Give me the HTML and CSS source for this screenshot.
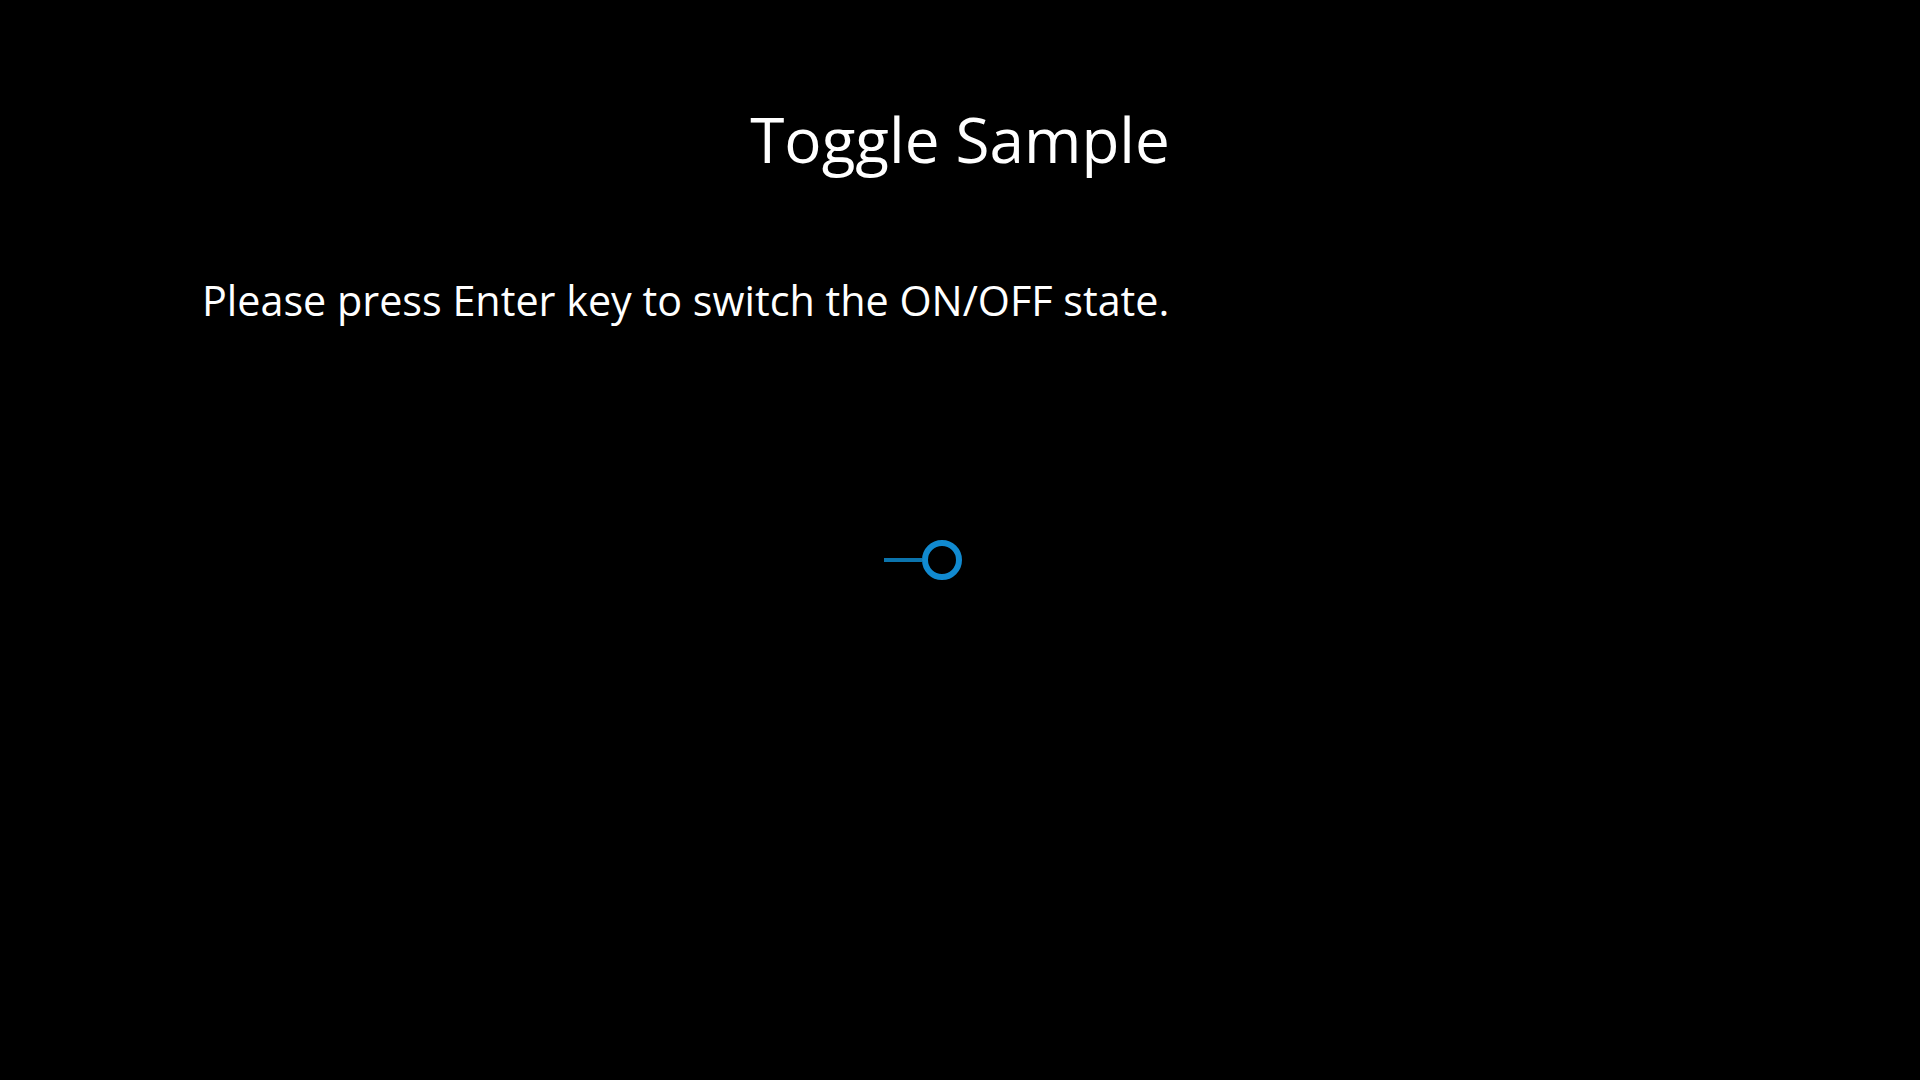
FILE: index.html
```html
<!DOCTYPE html>
<html>
<head>
<meta charset="utf-8">
<link rel="stylesheet" href="styles.css">
</head>
<body>
<div class="page">
  <h1 class="title">Toggle Sample</h1>
  <p class="hint">Please press Enter key to switch the ON/OFF state.</p>
  <div class="toggle-row">
    <div class="toggle">
      <span class="track"></span>
      <span class="knob"></span>
    </div>
  </div>
</div>
</body>
</html>
```
FILE: styles.css
```css
html, body {
  margin: 0;
  padding: 0;
  background: #000;
  width: 1920px;
  height: 1080px;
  overflow: hidden;
}
.page {
  font-family: "Open Sans", "Noto Sans", sans-serif;
  color: #fff;
}
.title {
  margin: 0;
  padding-top: 95px;
  text-align: center;
  font-weight: 400;
  font-size: 62px;
  line-height: 88px;
}
.hint {
  margin: 0;
  padding-top: 87px;
  padding-left: 202px;
  font-size: 41.3px;
  line-height: 60px;
}
.toggle-row {
  display: flex;
  padding-top: 210px;
  padding-left: 884px;
}
.toggle {
  display: flex;
  align-items: center;
}
.track {
  width: 38px;
  height: 4px;
  background: #0b74ad;
}
.knob {
  width: 28px;
  height: 28px;
  border: 6px solid #118ad0;
  border-radius: 50%;
}
```
